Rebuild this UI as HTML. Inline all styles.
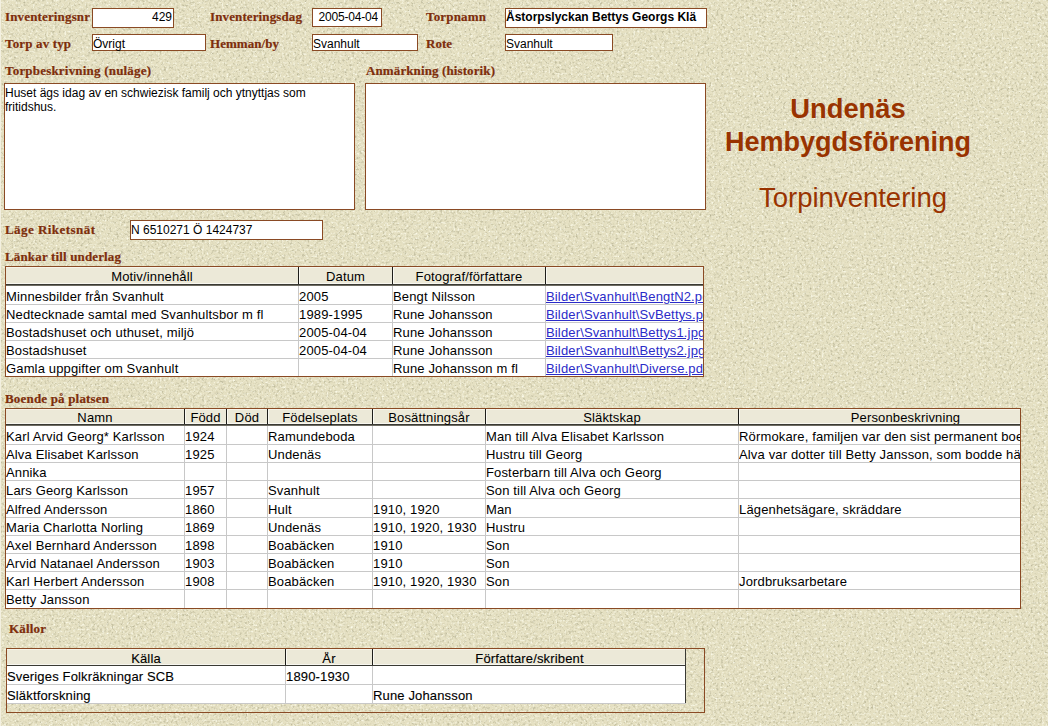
<!DOCTYPE html><html><head><meta charset="utf-8"><style>
html,body{margin:0;padding:0;}
body{width:1048px;height:726px;overflow:hidden;position:relative;background:#E5E0C2;}
div{position:absolute;white-space:nowrap;}
.lbl{font:bold 13px "Liberation Serif",serif;line-height:14px;color:#7E2E0C;-webkit-text-stroke:0.2px #7E2E0C;}
.box{border:1px solid #8A4A24;background:#fff;}
.itx{font:12px "Liberation Sans",sans-serif;line-height:14px;color:#000;overflow:hidden;}
.ttx{font:13px "Liberation Sans",sans-serif;line-height:14px;color:#000;letter-spacing:0.15px;}
.lnk{color:#2B2BC8;text-decoration:underline;}
.bld{-webkit-text-stroke:0.12px #000;}
.ttl{font:26px "Liberation Sans",sans-serif;color:#993300;text-align:center;}
</style></head><body>
<svg width="1048" height="726" style="position:absolute;left:0;top:0">
<defs>
<filter id="spk" x="0" y="0" width="100%" height="100%">
<feTurbulence type="fractalNoise" baseFrequency="0.42" numOctaves="2" seed="7" result="t"/>
<feColorMatrix in="t" type="matrix" values="0 0 0 0 0.45  0 0 0 0 0.43  0 0 0 0 0.28  2.4 0 0 0 -1.22"/>
<feGaussianBlur stdDeviation="0.35"/>
</filter>
<filter id="hil" x="0" y="0" width="100%" height="100%">
<feTurbulence type="fractalNoise" baseFrequency="0.45" numOctaves="2" seed="11" result="t"/>
<feColorMatrix in="t" type="matrix" values="0 0 0 0 1  0 0 0 0 1  0 0 0 0 0.88  2.4 0 0 0 -1.25"/>
<feGaussianBlur stdDeviation="0.35"/>
</filter>
</defs>
<rect width="1048" height="726" filter="url(#spk)"/>
<rect width="1048" height="726" filter="url(#hil)"/>
</svg>
<div style="position:absolute;left:0px;top:0px;width:1px;height:726px;background:#F3F0E0"></div>
<div class="lbl" style="left:5px;top:10px;letter-spacing:0.15px">Inventeringsnr</div>
<div class="lbl" style="left:210px;top:10px;letter-spacing:0.12px">Inventeringsdag</div>
<div class="lbl" style="left:426px;top:10px;letter-spacing:0.17px">Torpnamn</div>
<div class="lbl" style="left:5px;top:37px;letter-spacing:0.15px">Torp av typ</div>
<div class="lbl" style="left:210px;top:37px;letter-spacing:0.05px">Hemman/by</div>
<div class="lbl" style="left:426px;top:37px;letter-spacing:0px">Rote</div>
<div class="box" style="left:92px;top:8px;width:80px;height:18px"></div>
<div class="itx" style="top:10px;left:92px;width:80px;text-align:right;">429</div>
<div class="box" style="left:312px;top:8px;width:68px;height:17px"></div>
<div class="itx" style="top:10px;left:312px;width:66px;text-align:right;letter-spacing:-0.2px">2005-04-04</div>
<div class="box" style="left:505px;top:8px;width:200px;height:18px"></div>
<div class="itx" style="top:10px;left:506px;width:200px;font-weight:bold;">Åstorpslyckan Bettys Georgs Klä</div>
<div class="box" style="left:92px;top:34px;width:112px;height:15px"></div>
<div class="itx" style="top:37px;left:93px;width:112px;">Övrigt</div>
<div class="box" style="left:312px;top:34px;width:104px;height:15px"></div>
<div class="itx" style="top:37px;left:313px;width:104px;">Svanhult</div>
<div class="box" style="left:505px;top:34px;width:106px;height:15px"></div>
<div class="itx" style="top:37px;left:506px;width:106px;">Svanhult</div>
<div class="lbl" style="left:5px;top:64px;letter-spacing:0.2px">Torpbeskrivning (nuläge)</div>
<div class="lbl" style="left:366px;top:64px;letter-spacing:0.11px">Anmärkning (historik)</div>
<div class="box" style="left:4px;top:83px;width:349px;height:125px"></div>
<div class="box" style="left:365px;top:83px;width:339px;height:125px"></div>
<div class="itx" style="left:5px;top:86px;width:340px;white-space:normal;line-height:14px">Huset ägs idag av en schwiezisk familj och ytnyttjas som fritidshus.</div>
<div class="lbl" style="left:5px;top:223px;letter-spacing:0.45px">Läge Riketsnät</div>
<div class="box" style="left:130px;top:220px;width:191px;height:18px"></div>
<div class="itx" style="top:223px;left:131px;width:191px;">N 6510271 Ö 1424737</div>
<div class="ttl" style="left:698px;top:94px;width:300px;font-weight:bold;font-size:27.3px;line-height:30px">Undenäs</div>
<div class="ttl" style="left:698px;top:127px;width:300px;font-weight:bold;font-size:27px;line-height:30px">Hembygdsförening</div>
<div class="ttl" style="left:703px;top:183px;width:300px;font-size:27.5px;line-height:30px">Torpinventering</div>
<div class="lbl" style="left:5px;top:250px;letter-spacing:0.15px">Länkar till underlag</div>
<div class="box" style="left:5px;top:266px;width:697px;height:109px;background:transparent"></div>
<div style="left:6px;top:267px;width:697px;height:17px;background:#ECE9D8"></div>
<div style="position:absolute;left:6px;top:267px;width:697px;height:1px;background:#F6F4EA"></div>
<div style="position:absolute;left:6px;top:283px;width:697px;height:1px;background:#F8F7F0"></div>
<div style="position:absolute;left:6px;top:284px;width:697px;height:1px;background:#3A3A34"></div>
<div style="position:absolute;left:6px;top:285px;width:697px;height:1px;background:#6E6C62"></div>
<div style="left:6px;top:286px;width:697px;height:90px;background:#fff"></div>
<div style="position:absolute;left:6px;top:304px;width:697px;height:1px;background:#C8C8C8"></div>
<div style="position:absolute;left:6px;top:322px;width:697px;height:1px;background:#C8C8C8"></div>
<div style="position:absolute;left:6px;top:340px;width:697px;height:1px;background:#C8C8C8"></div>
<div style="position:absolute;left:6px;top:358px;width:697px;height:1px;background:#C8C8C8"></div>
<div style="position:absolute;left:298px;top:267px;width:1px;height:17px;background:#1E1E1A"></div>
<div style="position:absolute;left:299px;top:268px;width:1px;height:15px;background:#FAF9F2"></div>
<div style="position:absolute;left:298px;top:286px;width:1px;height:90px;background:#C8C8C8"></div>
<div style="position:absolute;left:392px;top:267px;width:1px;height:17px;background:#1E1E1A"></div>
<div style="position:absolute;left:393px;top:268px;width:1px;height:15px;background:#FAF9F2"></div>
<div style="position:absolute;left:392px;top:286px;width:1px;height:90px;background:#C8C8C8"></div>
<div style="position:absolute;left:545px;top:267px;width:1px;height:17px;background:#1E1E1A"></div>
<div style="position:absolute;left:546px;top:268px;width:1px;height:15px;background:#FAF9F2"></div>
<div style="position:absolute;left:545px;top:286px;width:1px;height:90px;background:#C8C8C8"></div>
<div class="ttx" style="left:6px;top:270px;width:292px;text-align:center;overflow:hidden">Motiv/innehåll</div>
<div class="ttx" style="left:299px;top:270px;width:93px;text-align:center;overflow:hidden">Datum</div>
<div class="ttx" style="left:393px;top:270px;width:152px;text-align:center;overflow:hidden">Fotograf/författare</div>
<div class="ttx" style="left:546px;top:270px;width:157px;text-align:center;overflow:hidden"></div>
<div class="ttx" style="left:6px;top:290px;width:292px;overflow:hidden">Minnesbilder från Svanhult</div>
<div class="ttx" style="left:299px;top:290px;width:93px;overflow:hidden">2005</div>
<div class="ttx" style="left:393px;top:290px;width:152px;overflow:hidden">Bengt Nilsson</div>
<div class="ttx lnk" style="left:546px;top:290px;width:157px;overflow:hidden">Bilder\Svanhult\BengtN2.pdf</div>
<div class="ttx" style="left:6px;top:308px;width:292px;overflow:hidden">Nedtecknade samtal med Svanhultsbor m fl</div>
<div class="ttx" style="left:299px;top:308px;width:93px;overflow:hidden">1989-1995</div>
<div class="ttx" style="left:393px;top:308px;width:152px;overflow:hidden">Rune Johansson</div>
<div class="ttx lnk" style="left:546px;top:308px;width:157px;overflow:hidden">Bilder\Svanhult\SvBettys.pdf</div>
<div class="ttx" style="left:6px;top:326px;width:292px;overflow:hidden">Bostadshuset och uthuset, miljö</div>
<div class="ttx" style="left:299px;top:326px;width:93px;overflow:hidden">2005-04-04</div>
<div class="ttx" style="left:393px;top:326px;width:152px;overflow:hidden">Rune Johansson</div>
<div class="ttx lnk" style="left:546px;top:326px;width:157px;overflow:hidden">Bilder\Svanhult\Bettys1.jpg</div>
<div class="ttx" style="left:6px;top:344px;width:292px;overflow:hidden">Bostadshuset</div>
<div class="ttx" style="left:299px;top:344px;width:93px;overflow:hidden">2005-04-04</div>
<div class="ttx" style="left:393px;top:344px;width:152px;overflow:hidden">Rune Johansson</div>
<div class="ttx lnk" style="left:546px;top:344px;width:157px;overflow:hidden">Bilder\Svanhult\Bettys2.jpg</div>
<div class="ttx" style="left:6px;top:362px;width:292px;overflow:hidden">Gamla uppgifter om Svanhult</div>
<div class="ttx" style="left:393px;top:362px;width:152px;overflow:hidden">Rune Johansson m fl</div>
<div class="ttx lnk" style="left:546px;top:362px;width:157px;overflow:hidden">Bilder\Svanhult\Diverse.pdf</div>
<div class="lbl" style="left:5px;top:392px;letter-spacing:0.18px">Boende på platsen</div>
<div class="box" style="left:5px;top:408px;width:1014px;height:199px;background:transparent"></div>
<div style="left:6px;top:409px;width:1014px;height:15px;background:#ECE9D8"></div>
<div style="position:absolute;left:6px;top:409px;width:1014px;height:1px;background:#F6F4EA"></div>
<div style="position:absolute;left:6px;top:423px;width:1014px;height:1px;background:#F8F7F0"></div>
<div style="position:absolute;left:6px;top:424px;width:1014px;height:1px;background:#3A3A34"></div>
<div style="position:absolute;left:6px;top:425px;width:1014px;height:1px;background:#6E6C62"></div>
<div style="left:6px;top:426px;width:1014px;height:182px;background:#fff"></div>
<div style="position:absolute;left:6px;top:444px;width:1014px;height:1px;background:#C8C8C8"></div>
<div style="position:absolute;left:6px;top:462px;width:1014px;height:1px;background:#C8C8C8"></div>
<div style="position:absolute;left:6px;top:480px;width:1014px;height:1px;background:#C8C8C8"></div>
<div style="position:absolute;left:6px;top:498px;width:1014px;height:1px;background:#C8C8C8"></div>
<div style="position:absolute;left:6px;top:517px;width:1014px;height:1px;background:#C8C8C8"></div>
<div style="position:absolute;left:6px;top:535px;width:1014px;height:1px;background:#C8C8C8"></div>
<div style="position:absolute;left:6px;top:553px;width:1014px;height:1px;background:#C8C8C8"></div>
<div style="position:absolute;left:6px;top:571px;width:1014px;height:1px;background:#C8C8C8"></div>
<div style="position:absolute;left:6px;top:589px;width:1014px;height:1px;background:#C8C8C8"></div>
<div style="position:absolute;left:184px;top:409px;width:1px;height:15px;background:#1E1E1A"></div>
<div style="position:absolute;left:185px;top:410px;width:1px;height:13px;background:#FAF9F2"></div>
<div style="position:absolute;left:184px;top:426px;width:1px;height:182px;background:#C8C8C8"></div>
<div style="position:absolute;left:226px;top:409px;width:1px;height:15px;background:#1E1E1A"></div>
<div style="position:absolute;left:227px;top:410px;width:1px;height:13px;background:#FAF9F2"></div>
<div style="position:absolute;left:226px;top:426px;width:1px;height:182px;background:#C8C8C8"></div>
<div style="position:absolute;left:267px;top:409px;width:1px;height:15px;background:#1E1E1A"></div>
<div style="position:absolute;left:268px;top:410px;width:1px;height:13px;background:#FAF9F2"></div>
<div style="position:absolute;left:267px;top:426px;width:1px;height:182px;background:#C8C8C8"></div>
<div style="position:absolute;left:372px;top:409px;width:1px;height:15px;background:#1E1E1A"></div>
<div style="position:absolute;left:373px;top:410px;width:1px;height:13px;background:#FAF9F2"></div>
<div style="position:absolute;left:372px;top:426px;width:1px;height:182px;background:#C8C8C8"></div>
<div style="position:absolute;left:485px;top:409px;width:1px;height:15px;background:#1E1E1A"></div>
<div style="position:absolute;left:486px;top:410px;width:1px;height:13px;background:#FAF9F2"></div>
<div style="position:absolute;left:485px;top:426px;width:1px;height:182px;background:#C8C8C8"></div>
<div style="position:absolute;left:738px;top:409px;width:1px;height:15px;background:#1E1E1A"></div>
<div style="position:absolute;left:739px;top:410px;width:1px;height:13px;background:#FAF9F2"></div>
<div style="position:absolute;left:738px;top:426px;width:1px;height:182px;background:#C8C8C8"></div>
<div class="ttx" style="left:6px;top:411px;width:178px;text-align:center;overflow:hidden">Namn</div>
<div class="ttx" style="left:185px;top:411px;width:41px;text-align:center;overflow:hidden">Född</div>
<div class="ttx" style="left:227px;top:411px;width:40px;text-align:center;overflow:hidden">Död</div>
<div class="ttx" style="left:268px;top:411px;width:104px;text-align:center;overflow:hidden">Födelseplats</div>
<div class="ttx" style="left:373px;top:411px;width:112px;text-align:center;overflow:hidden">Bosättningsår</div>
<div class="ttx" style="left:486px;top:411px;width:252px;text-align:center;overflow:hidden">Släktskap</div>
<div style="left:739px;top:409px;width:281px;height:15px;overflow:hidden"><div class="ttx" style="left:0;top:2px;width:333px;text-align:center">Personbeskrivning</div></div>
<div class="ttx" style="left:6px;top:430px;width:178px;overflow:hidden">Karl Arvid Georg* Karlsson</div>
<div class="ttx" style="left:185px;top:430px;width:41px;overflow:hidden">1924</div>
<div class="ttx" style="left:268px;top:430px;width:104px;overflow:hidden">Ramundeboda</div>
<div class="ttx" style="left:486px;top:430px;width:252px;overflow:hidden">Man till Alva Elisabet Karlsson</div>
<div class="ttx" style="left:739px;top:430px;width:281px;overflow:hidden">Rörmokare, familjen var den sist permanent boende</div>
<div class="ttx" style="left:6px;top:448px;width:178px;overflow:hidden">Alva Elisabet Karlsson</div>
<div class="ttx" style="left:185px;top:448px;width:41px;overflow:hidden">1925</div>
<div class="ttx" style="left:268px;top:448px;width:104px;overflow:hidden">Undenäs</div>
<div class="ttx" style="left:486px;top:448px;width:252px;overflow:hidden">Hustru till Georg</div>
<div class="ttx" style="left:739px;top:448px;width:281px;overflow:hidden">Alva var dotter till Betty Jansson, som bodde här</div>
<div class="ttx" style="left:6px;top:466px;width:178px;overflow:hidden">Annika</div>
<div class="ttx" style="left:486px;top:466px;width:252px;overflow:hidden">Fosterbarn till Alva och Georg</div>
<div class="ttx" style="left:6px;top:484px;width:178px;overflow:hidden">Lars Georg Karlsson</div>
<div class="ttx" style="left:185px;top:484px;width:41px;overflow:hidden">1957</div>
<div class="ttx" style="left:268px;top:484px;width:104px;overflow:hidden">Svanhult</div>
<div class="ttx" style="left:486px;top:484px;width:252px;overflow:hidden">Son till Alva och Georg</div>
<div class="ttx" style="left:6px;top:503px;width:178px;overflow:hidden">Alfred Andersson</div>
<div class="ttx" style="left:185px;top:503px;width:41px;overflow:hidden">1860</div>
<div class="ttx" style="left:268px;top:503px;width:104px;overflow:hidden">Hult</div>
<div class="ttx" style="left:373px;top:503px;width:112px;overflow:hidden">1910, 1920</div>
<div class="ttx" style="left:486px;top:503px;width:252px;overflow:hidden">Man</div>
<div class="ttx" style="left:739px;top:503px;width:281px;overflow:hidden">Lägenhetsägare, skräddare</div>
<div class="ttx" style="left:6px;top:521px;width:178px;overflow:hidden">Maria Charlotta Norling</div>
<div class="ttx" style="left:185px;top:521px;width:41px;overflow:hidden">1869</div>
<div class="ttx" style="left:268px;top:521px;width:104px;overflow:hidden">Undenäs</div>
<div class="ttx" style="left:373px;top:521px;width:112px;overflow:hidden">1910, 1920, 1930</div>
<div class="ttx" style="left:486px;top:521px;width:252px;overflow:hidden">Hustru</div>
<div class="ttx" style="left:6px;top:539px;width:178px;overflow:hidden">Axel Bernhard Andersson</div>
<div class="ttx" style="left:185px;top:539px;width:41px;overflow:hidden">1898</div>
<div class="ttx" style="left:268px;top:539px;width:104px;overflow:hidden">Boabäcken</div>
<div class="ttx" style="left:373px;top:539px;width:112px;overflow:hidden">1910</div>
<div class="ttx" style="left:486px;top:539px;width:252px;overflow:hidden">Son</div>
<div class="ttx" style="left:6px;top:557px;width:178px;overflow:hidden">Arvid Natanael Andersson</div>
<div class="ttx" style="left:185px;top:557px;width:41px;overflow:hidden">1903</div>
<div class="ttx" style="left:268px;top:557px;width:104px;overflow:hidden">Boabäcken</div>
<div class="ttx" style="left:373px;top:557px;width:112px;overflow:hidden">1910</div>
<div class="ttx" style="left:486px;top:557px;width:252px;overflow:hidden">Son</div>
<div class="ttx" style="left:6px;top:575px;width:178px;overflow:hidden">Karl Herbert Andersson</div>
<div class="ttx" style="left:185px;top:575px;width:41px;overflow:hidden">1908</div>
<div class="ttx" style="left:268px;top:575px;width:104px;overflow:hidden">Boabäcken</div>
<div class="ttx" style="left:373px;top:575px;width:112px;overflow:hidden">1910, 1920, 1930</div>
<div class="ttx" style="left:486px;top:575px;width:252px;overflow:hidden">Son</div>
<div class="ttx" style="left:739px;top:575px;width:281px;overflow:hidden">Jordbruksarbetare</div>
<div class="ttx" style="left:6px;top:593px;width:178px;overflow:hidden">Betty Jansson</div>
<div class="lbl" style="left:9px;top:622px;letter-spacing:0.18px">Källor</div>
<div class="box" style="left:6px;top:648px;width:697px;height:63px;background:transparent"></div>
<div style="left:7px;top:649px;width:679px;height:16px;background:#ECE9D8"></div>
<div style="position:absolute;left:7px;top:649px;width:679px;height:1px;background:#F6F4EA"></div>
<div style="position:absolute;left:7px;top:664px;width:679px;height:1px;background:#F8F7F0"></div>
<div style="position:absolute;left:7px;top:665px;width:679px;height:1px;background:#3A3A34"></div>
<div style="left:7px;top:666px;width:679px;height:37px;background:#fff"></div>
<div style="position:absolute;left:7px;top:684px;width:679px;height:1px;background:#C8C8C8"></div>
<div style="position:absolute;left:285px;top:649px;width:1px;height:16px;background:#1E1E1A"></div>
<div style="position:absolute;left:286px;top:650px;width:1px;height:14px;background:#FAF9F2"></div>
<div style="position:absolute;left:285px;top:666px;width:1px;height:37px;background:#C8C8C8"></div>
<div style="position:absolute;left:372px;top:649px;width:1px;height:16px;background:#1E1E1A"></div>
<div style="position:absolute;left:373px;top:650px;width:1px;height:14px;background:#FAF9F2"></div>
<div style="position:absolute;left:372px;top:666px;width:1px;height:37px;background:#C8C8C8"></div>
<div class="ttx bld" style="left:7px;top:652px;width:278px;text-align:center;overflow:hidden">Källa</div>
<div class="ttx bld" style="left:286px;top:652px;width:86px;text-align:center;overflow:hidden">År</div>
<div class="ttx bld" style="left:373px;top:652px;width:313px;text-align:center;overflow:hidden">Författare/skribent</div>
<div class="ttx bld" style="left:7px;top:670px;width:278px;overflow:hidden">Sveriges Folkräkningar SCB</div>
<div class="ttx bld" style="left:286px;top:670px;width:86px;overflow:hidden">1890-1930</div>
<div class="ttx bld" style="left:7px;top:689px;width:278px;overflow:hidden">Släktforskning</div>
<div class="ttx bld" style="left:373px;top:689px;width:313px;overflow:hidden">Rune Johansson</div>
<div style="position:absolute;left:685px;top:649px;width:1px;height:55px;background:#3A3A34"></div>
<div style="position:absolute;left:7px;top:703px;width:679px;height:1px;background:#C8C8C8"></div>
</body></html>
